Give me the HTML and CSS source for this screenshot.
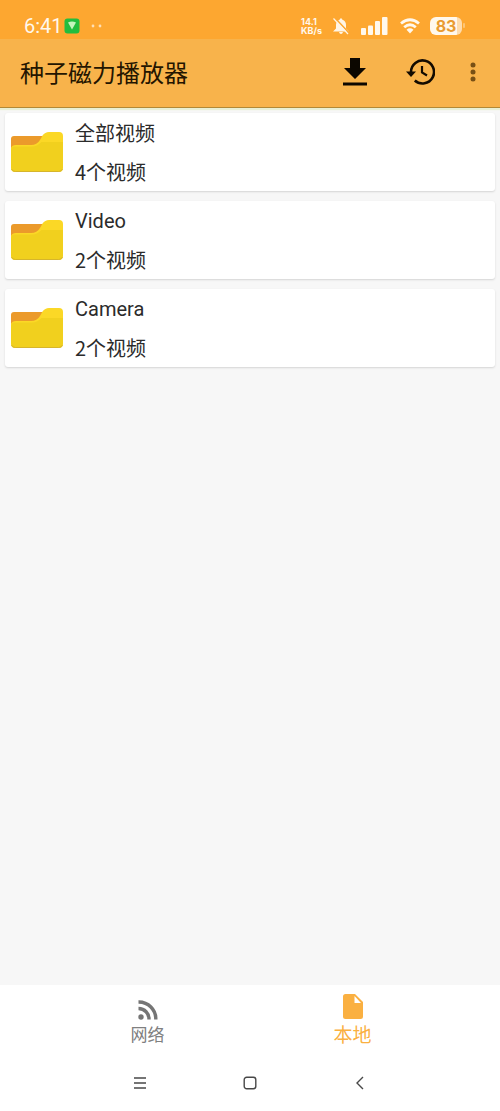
FILE: index.html
```html
<!DOCTYPE html>
<html lang="zh-CN">
<head>
<meta charset="utf-8">
<meta name="viewport" content="width=device-width, initial-scale=1">
<title>种子磁力播放器</title>
<link rel="stylesheet" href="styles.css">
</head>
<body>
<svg class="defs" width="0" height="0" aria-hidden="true">
  <symbol id="folder" viewBox="0 0 52 40" preserveAspectRatio="none">
    <path d="M0 16V7q0-3 3-3h33v12z" fill="#eb9a2b"/>
    <path d="M0 18v-2q1-3 5-3h15q6 0 9-5l2.500-4.500Q34 0 38 0h10q4 0 4 4v13z" fill="#fbd826"/>
    <path d="M0 18q0-3.500 4-3.500h17q5 0 9.500-4.500H52v26q0 4-4 4H4q-4 0-4-4z" fill="#f1d01e"/>
    <path d="M.5 37q1 2.500 4 2.500h43q3 0 4-2.500" fill="none" stroke="#d6b52c"/>
  </symbol>
</svg>
<div class="screen">
  <div class="status">
    <span class="clock">6:41</span>
    <svg class="badge" width="16" height="16" viewBox="0 0 16 16"><rect x=".5" y=".5" width="15" height="15" rx="3" fill="#22bd3e"/><path d="M4 4.500q4-2 8 0L8 11.500z" fill="#c4f5bd"/></svg>
    <svg class="dots" width="12" height="4" viewBox="0 0 12 4"><circle cx="2" cy="2" r="1.400" fill="#ffdfb4"/><circle cx="9" cy="2" r="1.400" fill="#ffdfb4"/></svg>
    <span class="speed"><span>14.1</span><span>KB/s</span></span>
    <svg class="bell" width="18" height="18" viewBox="0 0 18 18"><path d="M9 1.200q1.200 0 1.400 1.500Q14 4 14 8v3.500l3 3H1l3-3V8q0-4 3.600-5.300Q7.800 1.200 9 1.200zM7 15h4q-.5 2-2 2t-2-2z" fill="#fff5e6"/><path d="M3 1l14.500 15.500" stroke="#fda730" stroke-width="1.600"/><path d="M1.500 1.500l14.500 15.500" stroke="#fff5e6" stroke-width="1.200"/></svg>
    <svg class="signal" width="27" height="18" viewBox="0 0 27 18"><g fill="#fff8ed"><rect y="11" width="5" height="7" rx="1"/><rect x="7" y="8.500" width="5" height="9.500" rx="1"/><rect x="14" y="4" width="5" height="14" rx="1"/><rect x="21" width="5.500" height="18" rx="1"/></g></svg>
    <svg class="wifi" width="20" height="16" viewBox="0 0 20 16"><g fill="none" stroke="#fff8ed" stroke-width="2.800"><path d="M1 5.500q9-7.500 18 0"/><path d="M4.200 9.200q5.800-5 11.600 0"/></g><path d="M6.500 11.700q3.500-2.800 7 0L10 15.500z" fill="#fff8ed"/></svg>
    <span class="battery">83</span><i class="battery-tip"></i>
  </div>
  <header class="appbar">
    <h1>种子磁力播放器</h1>
    <button class="tool download" aria-label="下载"><svg width="24" height="28" viewBox="0 0 24 28"><path d="M7 0h10v10h6L12 21 1 10h6zM0 24.500h24v3H0z" fill="#0c0700"/></svg></button>
    <button class="tool history" aria-label="历史记录"><svg width="29" height="26" viewBox="0 0 29 26"><path d="M5 13A11.500 11.500 0 1 1 8.800 21.500" fill="none" stroke="#130b00" stroke-width="2.600"/><path d="M0 12.500h10L5 18z" fill="#130b00"/><path d="M16 7v6.500l5 3" fill="none" stroke="#130b00" stroke-width="2.200"/></svg></button>
    <button class="tool more" aria-label="更多"><svg width="6" height="20" viewBox="0 0 6 20"><g fill="#785015"><circle cx="3" cy="3" r="2.500"/><circle cx="3" cy="10" r="2.500"/><circle cx="3" cy="17" r="2.500"/></g></svg></button>
  </header>
  <main class="list">
    <a class="card" href="#"><svg class="folder"><use href="#folder"/></svg><span class="info"><span>全部视频</span><span>4个视频</span></span></a>
    <a class="card" href="#"><svg class="folder"><use href="#folder"/></svg><span class="info"><span class="latin">Video</span><span>2个视频</span></span></a>
    <a class="card" href="#"><svg class="folder"><use href="#folder"/></svg><span class="info"><span class="latin">Camera</span><span>2个视频</span></span></a>
  </main>
  <nav class="tabs">
    <a class="tab" href="#"><svg width="20" height="20" viewBox="0 0 20 20"><circle cx="3" cy="17" r="2.700" fill="#757575"/><g fill="none" stroke="#757575" stroke-width="3.400"><path d="M.5 8.500A10.500 10.500 0 0 1 11 19.500"/><path d="M.5 2A17 17 0 0 1 17.800 19.500"/></g></svg><span>网络</span></a>
    <a class="tab active" href="#"><svg width="20" height="25" viewBox="0 0 20 25"><path d="M2.500 0H12l8 8v14.500q0 2.500-2.500 2.500h-15Q0 25 0 22.500v-20Q0 0 2.500 0zM11.500 2v7H18z" fill="#fab041" fill-rule="evenodd"/></svg><span>本地</span></a>
  </nav>
  <div class="system">
    <button aria-label="最近任务"><svg width="14" height="14" viewBox="0 0 14 14"><path d="M1 2h12M1 7h12M1 12h12" stroke="#484848" stroke-width="1.400"/></svg></button>
    <button aria-label="主屏幕"><svg width="14" height="14" viewBox="0 0 14 14"><rect x="1.200" y="1.200" width="11.600" height="11.600" rx="2.500" fill="none" stroke="#484848" stroke-width="1.400"/></svg></button>
    <button aria-label="返回"><svg width="14" height="14" viewBox="0 0 14 14"><path d="M10 1L4 7l6 6" fill="none" stroke="#484848" stroke-width="1.400"/></svg></button>
  </div>
</div>
</body>
</html>
```

FILE: styles.css
```css
* { box-sizing: border-box; }
body {
  margin: 0;
  background: #f7f7f7;
  color: #2b2b2b;
  font-family: "Noto Sans CJK SC", sans-serif;
}
svg { display: block; flex: none; }
a { color: inherit; text-decoration: none; }
button { display: flex; align-items: center; justify-content: center; padding: 0; border: 0; background: none; }
.defs { position: absolute; }
.screen { display: flex; flex-direction: column; min-height: 100vh; }

.status {
  display: flex;
  align-items: center;
  height: 39px;
  padding: 12px 35px 0 24px;
  background: #fda730;
  color: #fff8ed;
}
.clock { font: 20px/24px Roboto, sans-serif; }
.badge { margin-left: 1px; }
.dots { margin-left: 11px; }
.speed { display: flex; flex-direction: column; margin-left: auto; font: bold 9px/9px Inter, sans-serif; }
.speed span { display: block; }
.bell { margin-left: 10px; }
.signal { margin-left: 11px; }
.wifi { margin-left: 12px; }
.battery {
  width: 32px;
  margin-left: 10px;
  border-radius: 6px;
  background: linear-gradient(90deg, #fff8ed 83%, #fedcae 83%);
  color: #e99b31;
  font: bold 16px/18px Inter, sans-serif;
  text-align: center;
}
.battery-tip { width: 2px; height: 5px; margin-left: 1px; border-radius: 1px; background: #fdc677; }

.appbar {
  display: flex;
  align-items: center;
  height: 69px;
  padding: 0 12px 2px 20px;
  border-bottom: 1px solid #b28935;
  background: #f8b34b;
  box-shadow: 0 2px 1px #e9f0d4;
}
.appbar h1 { flex: 1; margin: 0; color: #241500; font-size: 24px; font-weight: 400; line-height: 32px; }
.tool { height: 48px; }
.download { width: 62px; }
.history { width: 68px; }
.more { width: 30px; margin-left: 4px; }

.list { display: flex; flex: 1; flex-direction: column; gap: 10px; padding: 5px; }
.card {
  display: flex;
  align-items: center;
  min-height: 78px;
  padding: 0 6px;
  border-radius: 3px;
  background: #fff;
  box-shadow: 0 1px 2px #d4d4d4;
}
.folder { width: 52px; height: 40px; }
.info { display: flex; flex-direction: column; gap: 11px; margin-left: 12px; font-size: 20px; line-height: 28px; }
.latin { font-family: Roboto, sans-serif; }

.tabs { display: flex; height: 71px; padding: 0 9%; background: #fff; }
.tab {
  display: flex;
  flex: 1;
  flex-direction: column;
  align-items: center;
  padding-top: 15px;
  color: #808080;
  font-size: 17px;
  line-height: 28px;
}
.tab.active { padding-top: 9px; color: #fab041; font-size: 19px; line-height: 30px; }
.system { display: flex; height: 55px; padding: 0 17%; background: #fff; }
.system button { flex: 1; height: 54px; }
```
